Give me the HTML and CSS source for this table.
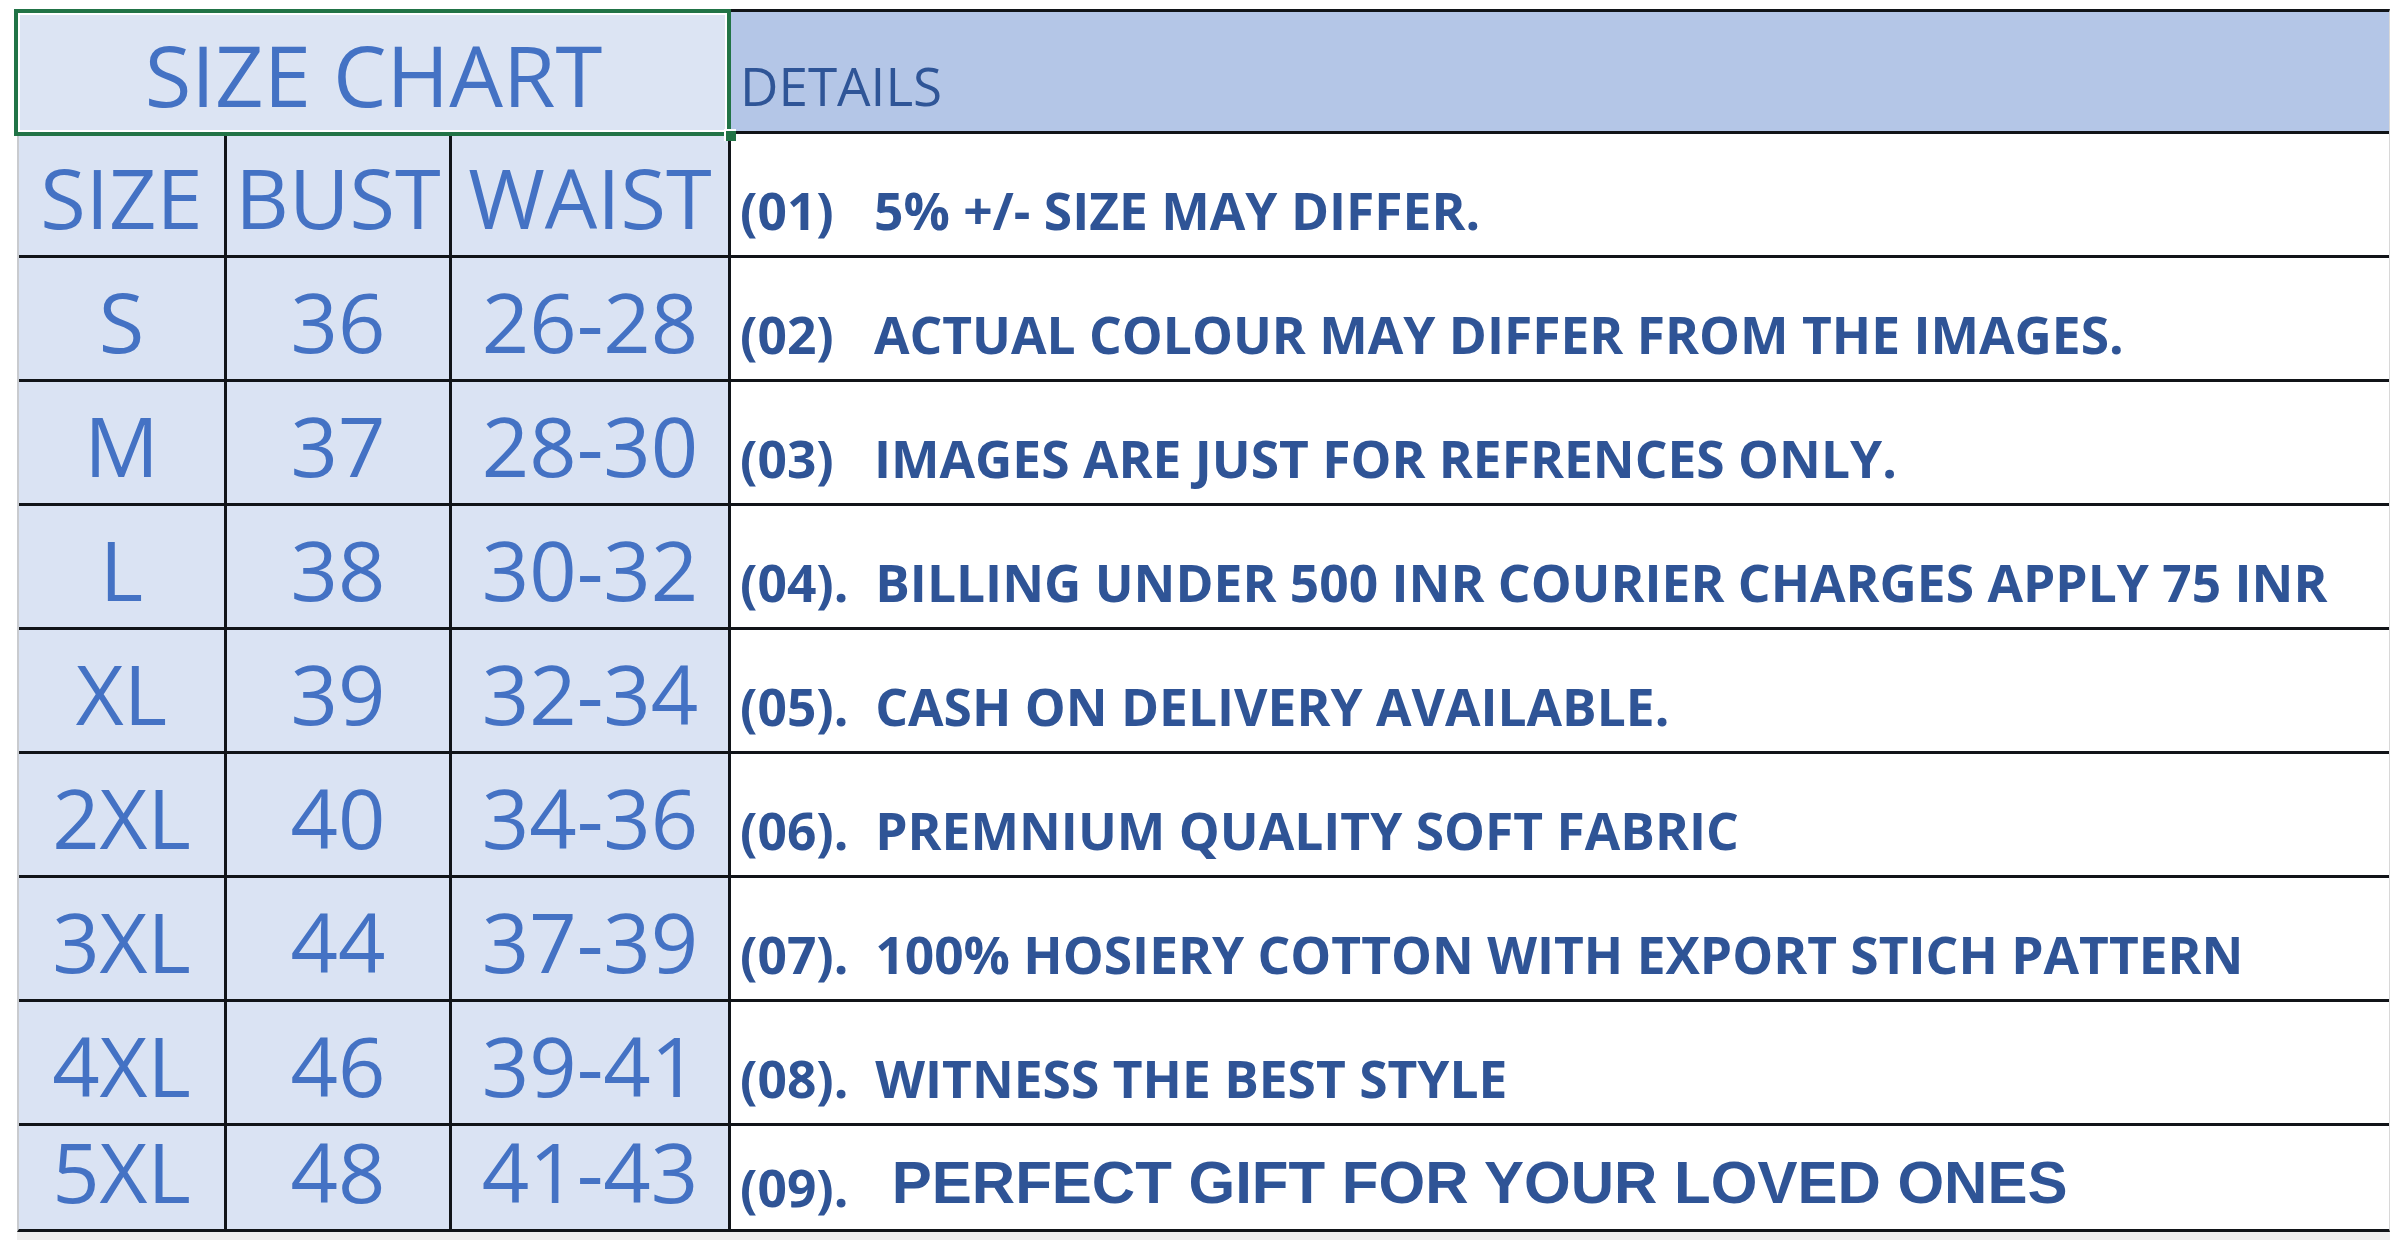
FILE: index.html
```html
<!DOCTYPE html>
<html lang="en">
<head>
<meta charset="utf-8">
<title>Size Chart</title>
<link rel="stylesheet" href="styles.css">
</head>
<body>
<div class="sheet">
  <div class="grid">
    <div class="cell title">SIZE CHART</div>
    <div class="cell dhead">DETAILS</div>

    <div class="cell sz">SIZE</div><div class="cell sz">BUST</div><div class="cell sz">WAIST</div>
    <div class="cell det">(01)   5% +/- SIZE MAY DIFFER.</div>

    <div class="cell sz">S</div><div class="cell sz">36</div><div class="cell sz">26-28</div>
    <div class="cell det">(02)   ACTUAL COLOUR MAY DIFFER FROM THE IMAGES.</div>

    <div class="cell sz">M</div><div class="cell sz">37</div><div class="cell sz">28-30</div>
    <div class="cell det">(03)   IMAGES ARE JUST FOR REFRENCES ONLY.</div>

    <div class="cell sz">L</div><div class="cell sz">38</div><div class="cell sz">30-32</div>
    <div class="cell det">(04).  BILLING UNDER 500 INR COURIER CHARGES APPLY 75 INR</div>

    <div class="cell sz">XL</div><div class="cell sz">39</div><div class="cell sz">32-34</div>
    <div class="cell det">(05).  CASH ON DELIVERY AVAILABLE.</div>

    <div class="cell sz">2XL</div><div class="cell sz">40</div><div class="cell sz">34-36</div>
    <div class="cell det">(06).  PREMNIUM QUALITY SOFT FABRIC</div>

    <div class="cell sz">3XL</div><div class="cell sz">44</div><div class="cell sz">37-39</div>
    <div class="cell det">(07).  100% HOSIERY COTTON WITH EXPORT STICH PATTERN</div>

    <div class="cell sz">4XL</div><div class="cell sz">46</div><div class="cell sz">39-41</div>
    <div class="cell det">(08).  WITNESS THE BEST STYLE</div>

    <div class="cell sz short">5XL</div><div class="cell sz short">48</div><div class="cell sz short">41-43</div>
    <div class="cell det last">(09).<span class="arial">  PERFECT GIFT FOR YOUR LOVED ONES</span></div>

    <div class="select"><span class="handle"></span></div>
  </div>
  <div class="below"></div>
</div>
</body>
</html>
```

FILE: styles.css
```css
html, body {
  margin: 0;
  padding: 0;
  background: #ffffff;
}

.sheet {
  padding-top: 9px;
  padding-left: 17px;
}

.grid {
  position: relative;
  box-sizing: border-box;
  width: 2373px;
  display: grid;
  grid-template-columns: 205px 222px 276px 1fr;
  grid-template-rows: 119px repeat(8, 121px) 103px;
  gap: 3px;
  background: #111418;
  border-left: 2px solid #c9cbcf;
  border-top: 3px solid #111418;
  border-bottom: 3px solid #111418;
  border-right: 1px solid #d8d8d8;
}

.cell {
  display: flex;
  align-items: flex-end;
  line-height: 1;
  min-height: 0;
}

.title {
  grid-column: 1 / 4;
  justify-content: center;
  background: #dce4f3;
  color: #4472c4;
  font-family: "Open Sans", sans-serif;
  font-size: 85px;
  padding-bottom: 14px;
}

.dhead {
  background: #b4c6e7;
  color: #2f5597;
  font-family: "Open Sans", sans-serif;
  font-size: 53px;
  padding-left: 9px;
  padding-bottom: 19px;
}

.sz {
  justify-content: center;
  background: #dae3f3;
  color: #4472c4;
  font-family: "Open Sans", sans-serif;
  font-size: 83px;
  line-height: 0.9;
  padding-bottom: 20px;
}

.sz.short {
  line-height: 0.85;
  padding-bottom: 22px;
}

.det {
  background: #ffffff;
  color: #2f5496;
  font-family: "Open Sans", sans-serif;
  font-weight: 700;
  font-size: 51.5px;
  white-space: pre;
  padding-left: 9px;
  padding-bottom: 19px;
}

.det.last {
  padding-bottom: 16px;
}

.arial {
  font-family: "Liberation Sans", Arial, sans-serif;
  font-weight: 700;
  font-size: 60px;
  margin-left: 10px;
}

.select {
  position: absolute;
  left: -5px;
  top: -3px;
  width: 717px;
  height: 127px;
  box-sizing: border-box;
  border: 4px solid #217346;
  box-shadow: inset 0 0 0 2px #ffffff;
  pointer-events: none;
}

.handle {
  position: absolute;
  right: -9px;
  bottom: -9px;
  width: 10px;
  height: 10px;
  background: #217346;
  border: 2px solid #ffffff;
  border-right: none;
  border-bottom: none;
}

.below {
  width: 2373px;
  height: 12px;
  background: #eeeeee;
}
```
